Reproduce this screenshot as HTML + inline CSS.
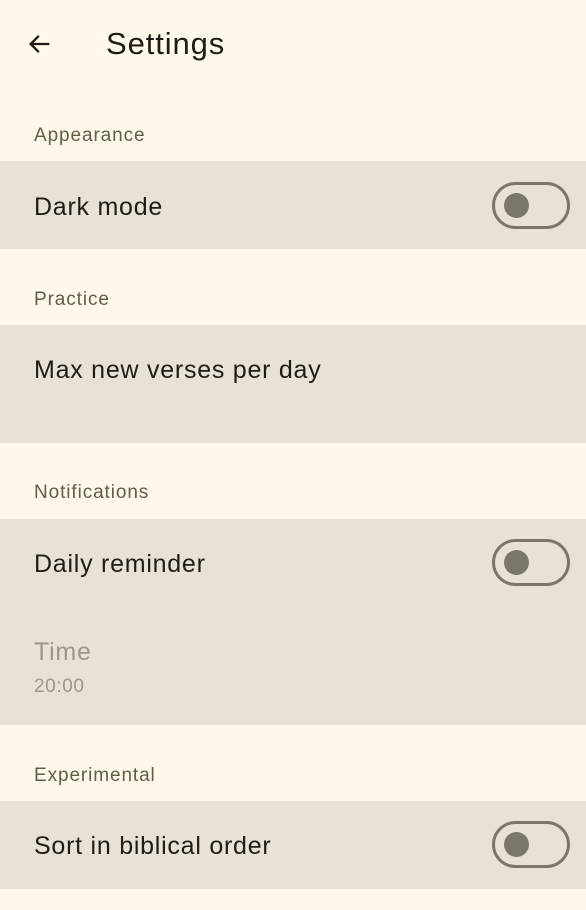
<!DOCTYPE html>
<html><head><style>
body{margin:0;width:586px;height:910px;background:#fff8eb;font-family:"Liberation Sans",Roboto,sans-serif;color:#1e1c14;position:relative;overflow:hidden}
.a{position:absolute}
.lbl{position:absolute;left:34px;font-size:19px;color:#625d45;letter-spacing:0.9px}
.tile{position:absolute;left:0;width:586px;background:#e8e2d6}
.t{position:absolute;left:34px;font-size:25px;letter-spacing:0.75px}
.sw{position:absolute;left:492px;width:72px;height:41px;border:3px solid #7a7768;border-radius:24px;box-sizing:content-box}
.sw::after{content:"";position:absolute;left:9px;top:8px;width:25px;height:25px;border-radius:50%;background:#7a7768}
</style></head><body>
<svg class="a" style="left:26px;top:30px" width="28" height="28" viewBox="0 0 24 24"><path d="M20 12H4.5M11 5l-7 7 7 7" fill="none" stroke="#1e1c14" stroke-width="2"/></svg>
<div class="a" style="left:106px;top:26px;font-size:31px;letter-spacing:0.9px">Settings</div>
<div class="lbl" style="top:125px">Appearance</div>
<div class="tile" style="top:161px;height:88px"><div class="t" style="top:32px">Dark mode</div><div class="sw" style="top:21px"></div></div>
<div class="lbl" style="top:289px">Practice</div>
<div class="tile" style="top:325px;height:118px"><div class="t" style="top:31px">Max new verses per day</div></div>
<div class="lbl" style="top:482px">Notifications</div>
<div class="tile" style="top:519px;height:206px"><div class="t" style="top:31px">Daily reminder</div><div class="sw" style="top:20px"></div>
<div class="t" style="top:119px;color:#9b978a">Time</div><div class="a" style="left:34px;top:157px;font-size:19px;color:#9b978a;letter-spacing:0.6px">20:00</div></div>
<div class="lbl" style="top:765px">Experimental</div>
<div class="tile" style="top:801px;height:88px"><div class="t" style="top:31px">Sort in biblical order</div><div class="sw" style="top:20px"></div></div>
</body></html>
